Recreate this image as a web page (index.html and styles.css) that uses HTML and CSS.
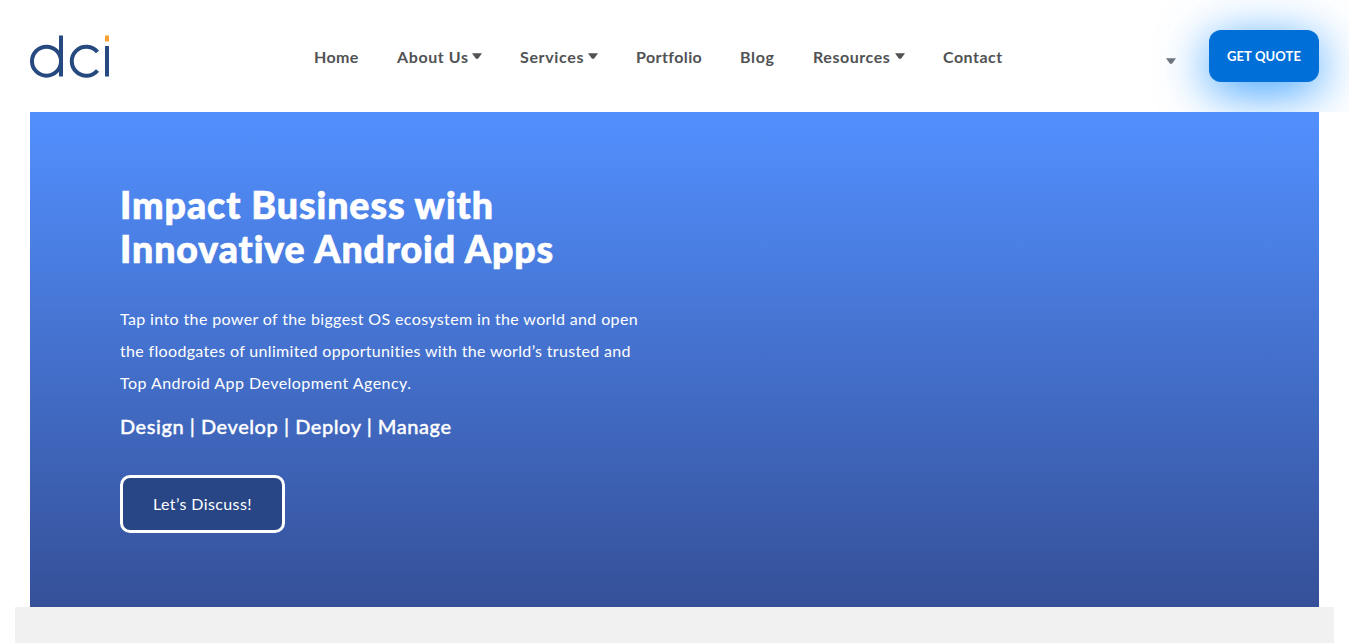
FILE: index.html
```html
<!DOCTYPE html>
<html lang="en">
<head>
<meta charset="utf-8">
<title>Android App Development</title>
<link rel="stylesheet" href="styles.css">
</head>
<body>
<header class="header">
  <a class="logo" aria-label="dci">
    <svg width="80" height="44" viewBox="0 0 80 44" fill="none" stroke="#264a80" stroke-width="4">
      <circle cx="16.500" cy="26.200" r="14.500"/>
      <path d="M31 0.500V41.500"/>
      <path d="M67.500 35.400A14.500 14.500 0 1 1 67.500 17"/>
      <path d="M77 11V41.500"/>
      <path d="M77 0.500V6.500" stroke="#ff9f33"/>
    </svg>
  </a>
  <nav class="nav">
    <a class="home">Home</a>
    <a class="about">About Us<i class="caret"></i></a>
    <a class="services">Services<i class="caret"></i></a>
    <a class="portfolio">Portfolio</a>
    <a class="blog">Blog</a>
    <a class="resources">Resources<i class="caret"></i></a>
    <a class="contact">Contact</a>
  </nav>
  <div class="actions">
    <i class="caret muted"></i>
    <a class="quote">GET QUOTE</a>
  </div>
</header>
<main class="hero">
  <h1><span class="h-a">Impact Business with</span><br><span class="h-b">Innovative Android Apps</span></h1>
  <p class="lead"><span class="l-a">Tap into the power of the biggest OS ecosystem in the world and open</span><br><span class="l-b">the floodgates of unlimited opportunities with the world’s trusted and</span><br><span class="l-c">Top Android App Development Agency.</span></p>
  <p class="tagline">Design | Develop | Deploy | Manage</p>
  <a class="discuss">Let’s Discuss!</a>
</main>
<section class="next"></section>
</body>
</html>
```
FILE: styles.css
```css
* { box-sizing: border-box; }
html { overflow: hidden; }
body { margin: 0; background: #fff; font-family: Lato, "Open Sans", sans-serif; font-variant-ligatures: none; height: 643px; display: flex; flex-direction: column; overflow: hidden; }
.header { width: 1349px; height: 112px; padding: 0 30px; display: flex; align-items: center; overflow: hidden; flex: none; }
.logo { width: 284px; height: 44px; flex: none; margin-top: 2px; }
.logo svg { display: block; }
.nav { display: flex; gap: 38px; font-size: 16px; line-height: 24px; font-weight: 700; color: #505254; white-space: nowrap; margin-top: 2px; }
.nav a { display: flex; justify-content: space-between; align-items: center; }
.home { width: 45px; letter-spacing: .4px; }
.about { width: 85px; letter-spacing: .6px; }
.services { width: 78px; letter-spacing: .65px; }
.portfolio { width: 66px; letter-spacing: .4px; }
.blog { width: 35px; letter-spacing: .7px; }
.resources { width: 92px; letter-spacing: .55px; }
.contact { width: 60px; letter-spacing: .5px; }
.caret { flex: none; width: 10px; height: 5.500px; background: #505254; clip-path: polygon(0 0, 100% 0, 60% 100%, 40% 100%); margin-bottom: 2px; }
.actions { margin-left: auto; display: flex; align-items: center; gap: 33px; }
.muted { background: #6c757d; margin: 10px 0 0; }
.quote { width: 110px; height: 52px; border-radius: 12px; background: #0070d8; color: #fff; font-size: 13px; line-height: 52px; font-weight: 700; text-align: center; letter-spacing: .1px; box-shadow: 0 10px 50px rgba(0, 132, 255, .8); }
.hero { margin: 0 47px 0 30px; height: 495px; flex: none; padding: 71px 90px 0; color: #fff; background: linear-gradient(#5290ff, #355098); }
h1 { margin: 0; font-size: 37.500px; line-height: 44px; font-weight: 900; white-space: nowrap; -webkit-text-stroke: .7px #fff; }
.h-a { letter-spacing: .95px; }
.h-b { letter-spacing: .92px; }
.lead { margin: 32px 0 0; font-size: 16px; line-height: 32px; white-space: nowrap; }
.l-a { letter-spacing: .37px; }
.l-b { letter-spacing: .33px; }
.l-c { letter-spacing: .46px; }
.tagline { margin: 15px 0 0; font-size: 20px; line-height: 24px; font-weight: 500; letter-spacing: .55px; white-space: nowrap; -webkit-text-stroke: .35px #fff; }
.discuss { display: block; width: 165px; height: 58px; margin-top: 37px; border: 3px solid #fff; border-radius: 10px; background: #284685; line-height: 52px; font-size: 16px; letter-spacing: .4px; text-align: center; }
.next { margin: 0 32px 0 15px; flex: 1; background: #f1f1f1; }
```
